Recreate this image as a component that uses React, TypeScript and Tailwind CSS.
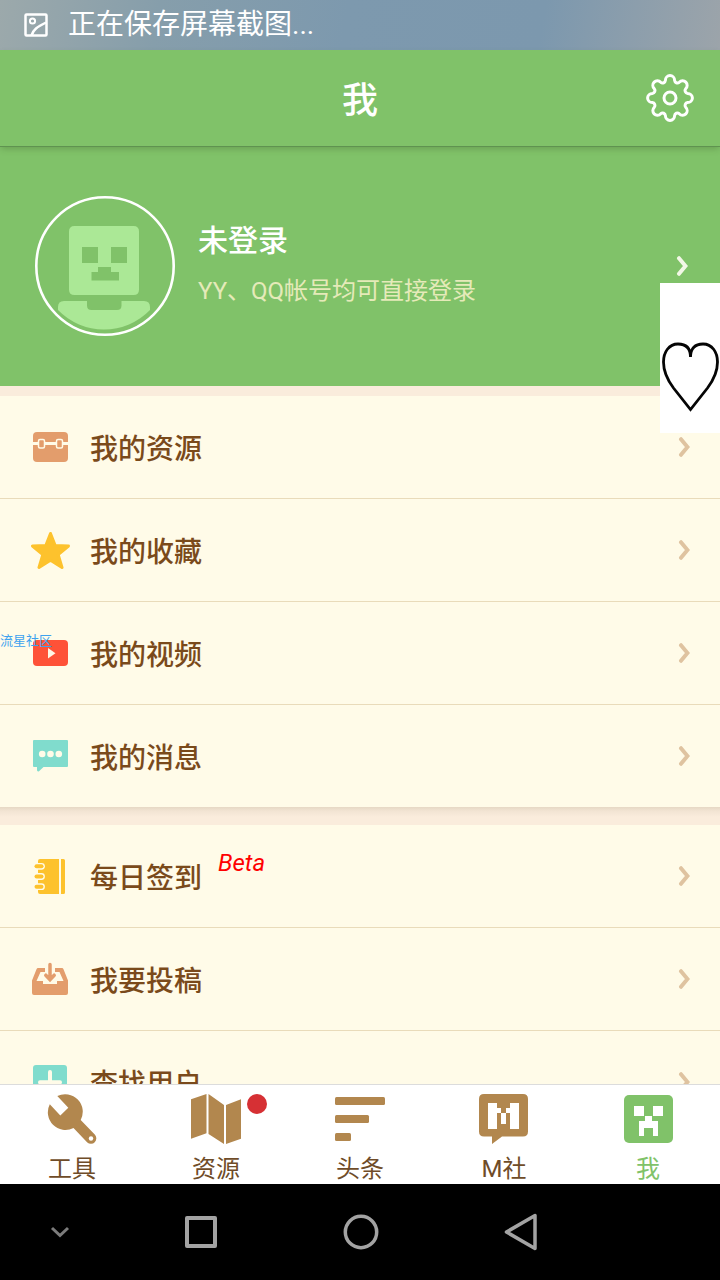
import type { ReactNode } from "react";

/* Outline of an eight-lobed gear centred on (24, 24). */
function gearPath() {
  const at = (angle: number, x: number, y: number) => {
    const px = 24 + x * Math.cos(angle) - y * Math.sin(angle);
    const py = 24 + x * Math.sin(angle) + y * Math.cos(angle);
    return `${px.toFixed(2)} ${py.toFixed(2)}`;
  };
  let d = "";
  for (let i = 0; i < 8; i++) {
    const a = (i * Math.PI) / 4;
    d += i === 0 ? `M${at(a, -4.6, -17.6)}` : `A2.8 2.8 0 0 0 ${at(a, -4.6, -17.6)}`;
    d += `A4.6 4.8 ${i * 45} 0 1 ${at(a, 4.6, -17.6)}`;
  }
  return d + `A2.8 2.8 0 0 0 ${at(0, -4.6, -17.6)}Z`;
}

function Icon({ children }: { children: ReactNode }) {
  return (
    <svg viewBox="0 0 40 40" className="size-10 shrink-0" aria-hidden="true">
      {children}
    </svg>
  );
}

function TabIcon({ children }: { children: ReactNode }) {
  return (
    <svg viewBox="0 0 50 50" className="size-[50px]" aria-hidden="true">
      {children}
    </svg>
  );
}

function Chevron({ className }: { className: string }) {
  return (
    <svg viewBox="0 0 12 20" className={`h-5 w-3 shrink-0 ${className}`} fill="none" stroke="currentColor" strokeWidth="4" strokeLinecap="round" strokeLinejoin="miter" aria-hidden="true">
      <path d="M3 2.2 9.500 10 3 17.800" />
    </svg>
  );
}

const chest = (
  <Icon>
    <rect x="3" y="5" width="35" height="30" rx="4" fill="#e39d6c" />
    <path d="M3 16.500h35" stroke="#fffbe8" strokeWidth="3" />
    <rect x="8.500" y="12.500" width="6" height="8.500" rx="1.500" fill="#e39d6c" stroke="#fffbe8" strokeWidth="1.500" />
    <rect x="26.500" y="12.500" width="6" height="8.500" rx="1.500" fill="#e39d6c" stroke="#fffbe8" strokeWidth="1.500" />
  </Icon>
);

const star = (
  <Icon>
    <path d="M20.500 3.500 25.200 15.500 38.500 16 28.200 24.700 32 37.500 20.500 30.300 9 37.500 12.800 24.700 2.500 16 15.800 15.500Z" fill="#fdc22d" stroke="#fdc22d" strokeWidth="3" strokeLinejoin="round" />
  </Icon>
);

const video = (
  <Icon>
    <rect x="3" y="7" width="35" height="26" rx="4" fill="#fe5238" />
    <path d="M18 15v10.500l7.500-5.200z" fill="#fff6e6" />
  </Icon>
);

const message = (
  <Icon>
    <path d="M4 4h33a1 1 0 0 1 1 1v25a1 1 0 0 1-1 1H13.500l-4.500 4.300q-2 .700-2-1.300v-3H4a1 1 0 0 1-1-1V5a1 1 0 0 1 1-1z" fill="#80dccd" />
    <g fill="#fffbe8">
      <circle cx="12.200" cy="18" r="3.300" />
      <circle cx="20.500" cy="18" r="3.300" />
      <circle cx="28.800" cy="18" r="3.300" />
    </g>
  </Icon>
);

const notebook = (
  <Icon>
    <path d="M10 3h19v35H10q-2 0-2-2V5q0-2 2-2zM31 3h2.500Q35 3 35 4.500v32Q35 38 33.500 38H31z" fill="#fdc22d" />
    {[10.3, 20.5, 30.7].map((y) => (
      <g key={y}>
        <path d={`M6 ${y}h5.500`} stroke="#fffbe8" strokeWidth="6.800" strokeLinecap="round" />
        <path d={`M6.500 ${y}h5`} stroke="#fdc22d" strokeWidth="4" strokeLinecap="round" />
      </g>
    ))}
  </Icon>
);

const tray = (
  <Icon>
    <path d="M8 9h7v4h-4.500L6.500 22H13v3h14v-3h6.500l-4-9H25V9h7q1 0 1.500 1.200L38 21.500V34q0 2-2 2H4q-2 0-2-2V21.500L6.500 10.200Q7 9 8 9z" fill="#e39d6c" />
    <path d="M20 5.500v14M15.800 16.200l4.200 4.500 4.200-4.500" fill="none" stroke="#e39d6c" strokeWidth="3.500" strokeLinecap="round" />
  </Icon>
);

const plus = (
  <Icon>
    <rect x="3" y="3" width="34" height="35" rx="3" fill="#80dccd" />
    <path d="M20 10v21M10 20.300h20" stroke="#fffbe8" strokeWidth="4" strokeLinecap="round" />
  </Icon>
);

type Item = { label: string; icon: ReactNode; beta?: boolean };

const personal: Item[] = [
  { label: "我的资源", icon: chest },
  { label: "我的收藏", icon: star },
  { label: "我的视频", icon: video },
  { label: "我的消息", icon: message },
];

const community: Item[] = [
  { label: "每日签到", icon: notebook, beta: true },
  { label: "我要投稿", icon: tray },
  { label: "查找用户", icon: plus },
];

function MenuList({ items }: { items: Item[] }) {
  return (
    <ul className="divide-y divide-[#e9dbba] bg-[#fffbe8]">
      {items.map((item) => (
        <li key={item.label}>
          <a href="#" className="flex h-[102px] items-center pr-[30px] pl-[30px]">
            {item.icon}
            <span className="ml-5 pt-1.5 text-[28px] leading-10 font-medium text-[#7a4a1b]">{item.label}</span>
            {item.beta && <em className="mt-6 ml-4 self-start text-2xl leading-7 text-[#ff0000]">Beta</em>}
            <Chevron className="ml-auto text-[#dfc3a0]" />
          </a>
        </li>
      ))}
    </ul>
  );
}

const tabs = [
  {
    label: "工具",
    icon: (
      <TabIcon>
        <path d="M10.300 2A17.600 17.600 0 0 1 33.700 26L48 40.700A5.500 5.500 0 0 1 40.300 48.500L26.500 34A17.600 17.600 0 0 1 2.800 10.300L13.300 21.500 21.300 13.700Z" fill="#b2874e" />
        <circle cx="44" cy="44.500" r="2.200" fill="#fff" />
      </TabIcon>
    ),
  },
  {
    label: "资源",
    dot: true,
    icon: (
      <TabIcon>
        <path d="M0 5.300 15.500 0v39.300L0 44.700zM17.500 0 33 11v39L17.500 40zM35 11l15-5.700v39.400L35 50z" fill="#b2874e" />
      </TabIcon>
    ),
  },
  {
    label: "头条",
    icon: (
      <TabIcon>
        <g fill="#b2874e">
          <rect y="3" width="50" height="8" rx="1.500" />
          <rect y="21" width="34" height="8" rx="1.500" />
          <rect y="39" width="16" height="8" rx="1.500" />
        </g>
      </TabIcon>
    ),
  },
  {
    label: "M社",
    icon: (
      <TabIcon>
        <path d="M5 0h39q5 0 5 5v32.500q0 5-5 5H23L13 50v-7.500H5q-5 0-5-5V5q0-5 5-5z" fill="#b2874e" />
        <path d="M9 9h9v5h4v5h5v-5h4V9h9v26h-9V19h-4v11h-5V19h-4v16H9z" fill="#fff" />
      </TabIcon>
    ),
  },
  {
    label: "我",
    active: true,
    icon: (
      <TabIcon>
        <rect x="1" y="1" width="49" height="48" rx="5" fill="#80c269" />
        <path d="M11 12h10v10H11zM30 12h10v10H30zM22 22h7v5h6v15h-5v-8h-9v8h-5V27h6z" fill="#fff" />
      </TabIcon>
    ),
  },
];

export default function App() {
  return (
    <div className="relative flex h-dvh flex-col overflow-hidden bg-[#faecdc] font-[Roboto,'Noto_Sans_CJK_SC',sans-serif]">
      <div className="flex h-[50px] shrink-0 items-center bg-[linear-gradient(100deg,#9ca9ab_0%,#869eab_22%,#7d99ae_48%,#7c98ae_75%,#9ca4aa_100%)] pl-6 text-white">
        <svg viewBox="0 0 24 24" className="size-6" fill="none" stroke="currentColor" strokeWidth="2.500" aria-hidden="true">
          <rect x="1.500" y="1.500" width="21" height="21" rx="1" />
          <circle cx="8.500" cy="8" r="2.600" strokeWidth="2" />
          <path d="M7.500 22.500Q9 18 12 15.500T22 9.500" />
        </svg>
        <span className="ml-5 text-[28px] leading-10">正在保存屏幕截图...</span>
      </div>

      <header className="relative z-10 grid h-[97px] shrink-0 grid-cols-[1fr_auto_1fr] items-center border-b border-[#5f9350] bg-[#80c269] px-[26px] text-white shadow-[0_3px_6px_-1px_rgba(60,90,40,0.3)]">
        <h1 className="col-start-2 pt-1.5 text-4xl leading-[48px] font-medium">我</h1>
        <button type="button" aria-label="设置" className="justify-self-end">
          <svg viewBox="0 0 48 48" className="size-12" fill="none" stroke="currentColor" strokeWidth="3" aria-hidden="true">
            <path d={gearPath()} strokeLinejoin="round" />
            <circle cx="24" cy="24" r="6" />
          </svg>
        </button>
      </header>

      <main className="min-h-0 flex-1 overflow-y-auto [scrollbar-width:none]">
        <a href="#" className="flex h-[239px] items-center bg-[#80c269] pr-8 pb-0.5 pl-[35px]">
          <svg viewBox="0 0 140 140" className="size-[140px] shrink-0" aria-hidden="true">
            <circle cx="70" cy="70" r="68.700" fill="none" stroke="#fff" strokeWidth="2.600" />
            <path d="M39.500 30h59q5.500 0 5.500 5.500v58q0 5.500-5.500 5.500h-59q-5.500 0-5.500-5.500v-58q0-5.500 5.500-5.500z" fill="#abe896" />
            <path d="M47 51h16v16H47zM76 51h16v16H76zM63 71h13v5h8v8.500H56.500V76H63z" fill="#80c269" />
            <path d="M29 105h23v4.500q0 4.500 4.500 4.500H82q4.500 0 4.500-4.500V105H109q6 0 6 6v3A64 64 0 0 1 23 114v-3q0-6 6-6z" fill="#abe896" />
          </svg>
          <div className="ml-[23px] pb-1">
            <p className="text-3xl leading-[44px] font-medium text-white">未登录</p>
            <p className="mt-2.5 text-2xl leading-9 text-[#e5eab9]">YY、QQ帐号均可直接登录</p>
          </div>
          <Chevron className="ml-auto text-[#f2f7e6]" />
        </a>
        <div className="h-2.5" />
        <MenuList items={personal} />
        <div className="h-[18px] bg-[linear-gradient(#e6d8c4_0,#f2e4d3_4px,#faecdc_10px)]" />
        <MenuList items={community} />
      </main>

      <nav className="relative grid h-[100px] shrink-0 grid-cols-5 bg-white shadow-[inset_0_1px_0_#dcdcdc]">
        {tabs.map((tab) => (
          <a key={tab.label} href="#" className="flex flex-col items-center pt-2.5">
            <span className="relative">
              {tab.icon}
              {tab.dot && <span className="absolute top-0 left-14 size-5 rounded-full bg-[#d63034]" />}
            </span>
            <span className={tab.active ? "mt-2 pt-px text-2xl leading-8 text-[#80c269]" : "mt-2 pt-px text-2xl leading-8 text-[#6f4c28]"}>{tab.label}</span>
          </a>
        ))}
      </nav>

      <div className="grid h-24 shrink-0 grid-cols-[3fr_4fr_4fr_4fr_3fr] items-center justify-items-center bg-black text-[#a3a3a3]">
        <button type="button" aria-label="收起">
          <svg viewBox="0 0 20 12" className="h-3 w-5 text-[#7c7c7c]" fill="none" stroke="currentColor" strokeWidth="3">
            <path d="m2 2 8 7.500L18 2" />
          </svg>
        </button>
        <button type="button" aria-label="最近任务">
          <svg viewBox="0 0 40 40" className="size-10" fill="none" stroke="currentColor" strokeWidth="4" strokeLinejoin="round">
            <rect x="7" y="6" width="28" height="28" />
          </svg>
        </button>
        <button type="button" aria-label="主屏幕">
          <svg viewBox="0 0 40 40" className="size-10" fill="none" stroke="currentColor" strokeWidth="3.500">
            <circle cx="21" cy="20" r="15.700" />
          </svg>
        </button>
        <button type="button" aria-label="返回">
          <svg viewBox="0 0 40 40" className="size-10" fill="none" stroke="currentColor" strokeWidth="3.500" strokeLinejoin="round">
            <path d="M35 3.500v33L6.500 20z" />
          </svg>
        </button>
      </div>

      <div className="absolute top-[283px] right-0 z-20 h-[150px] w-[60px] bg-white">
        <svg viewBox="0 0 60 150" className="h-[150px] w-[60px]" fill="none" stroke="#050505" strokeWidth="2.800" aria-hidden="true">
          <path d="M30.500 74C30.500 65 26 61 18 61 9 61 3.500 69 3.500 79c0 9 4 18 10 26l17 21.500 17-21.500c6-8 10-17 10-26C57.500 69 52 61 43 61c-8 0-12.500 4-12.500 13z" />
        </svg>
      </div>
      <span className="absolute top-[633px] left-0 z-20 text-[13px] leading-4 text-[#3ea2ef]">流星社区</span>
    </div>
  );
}
